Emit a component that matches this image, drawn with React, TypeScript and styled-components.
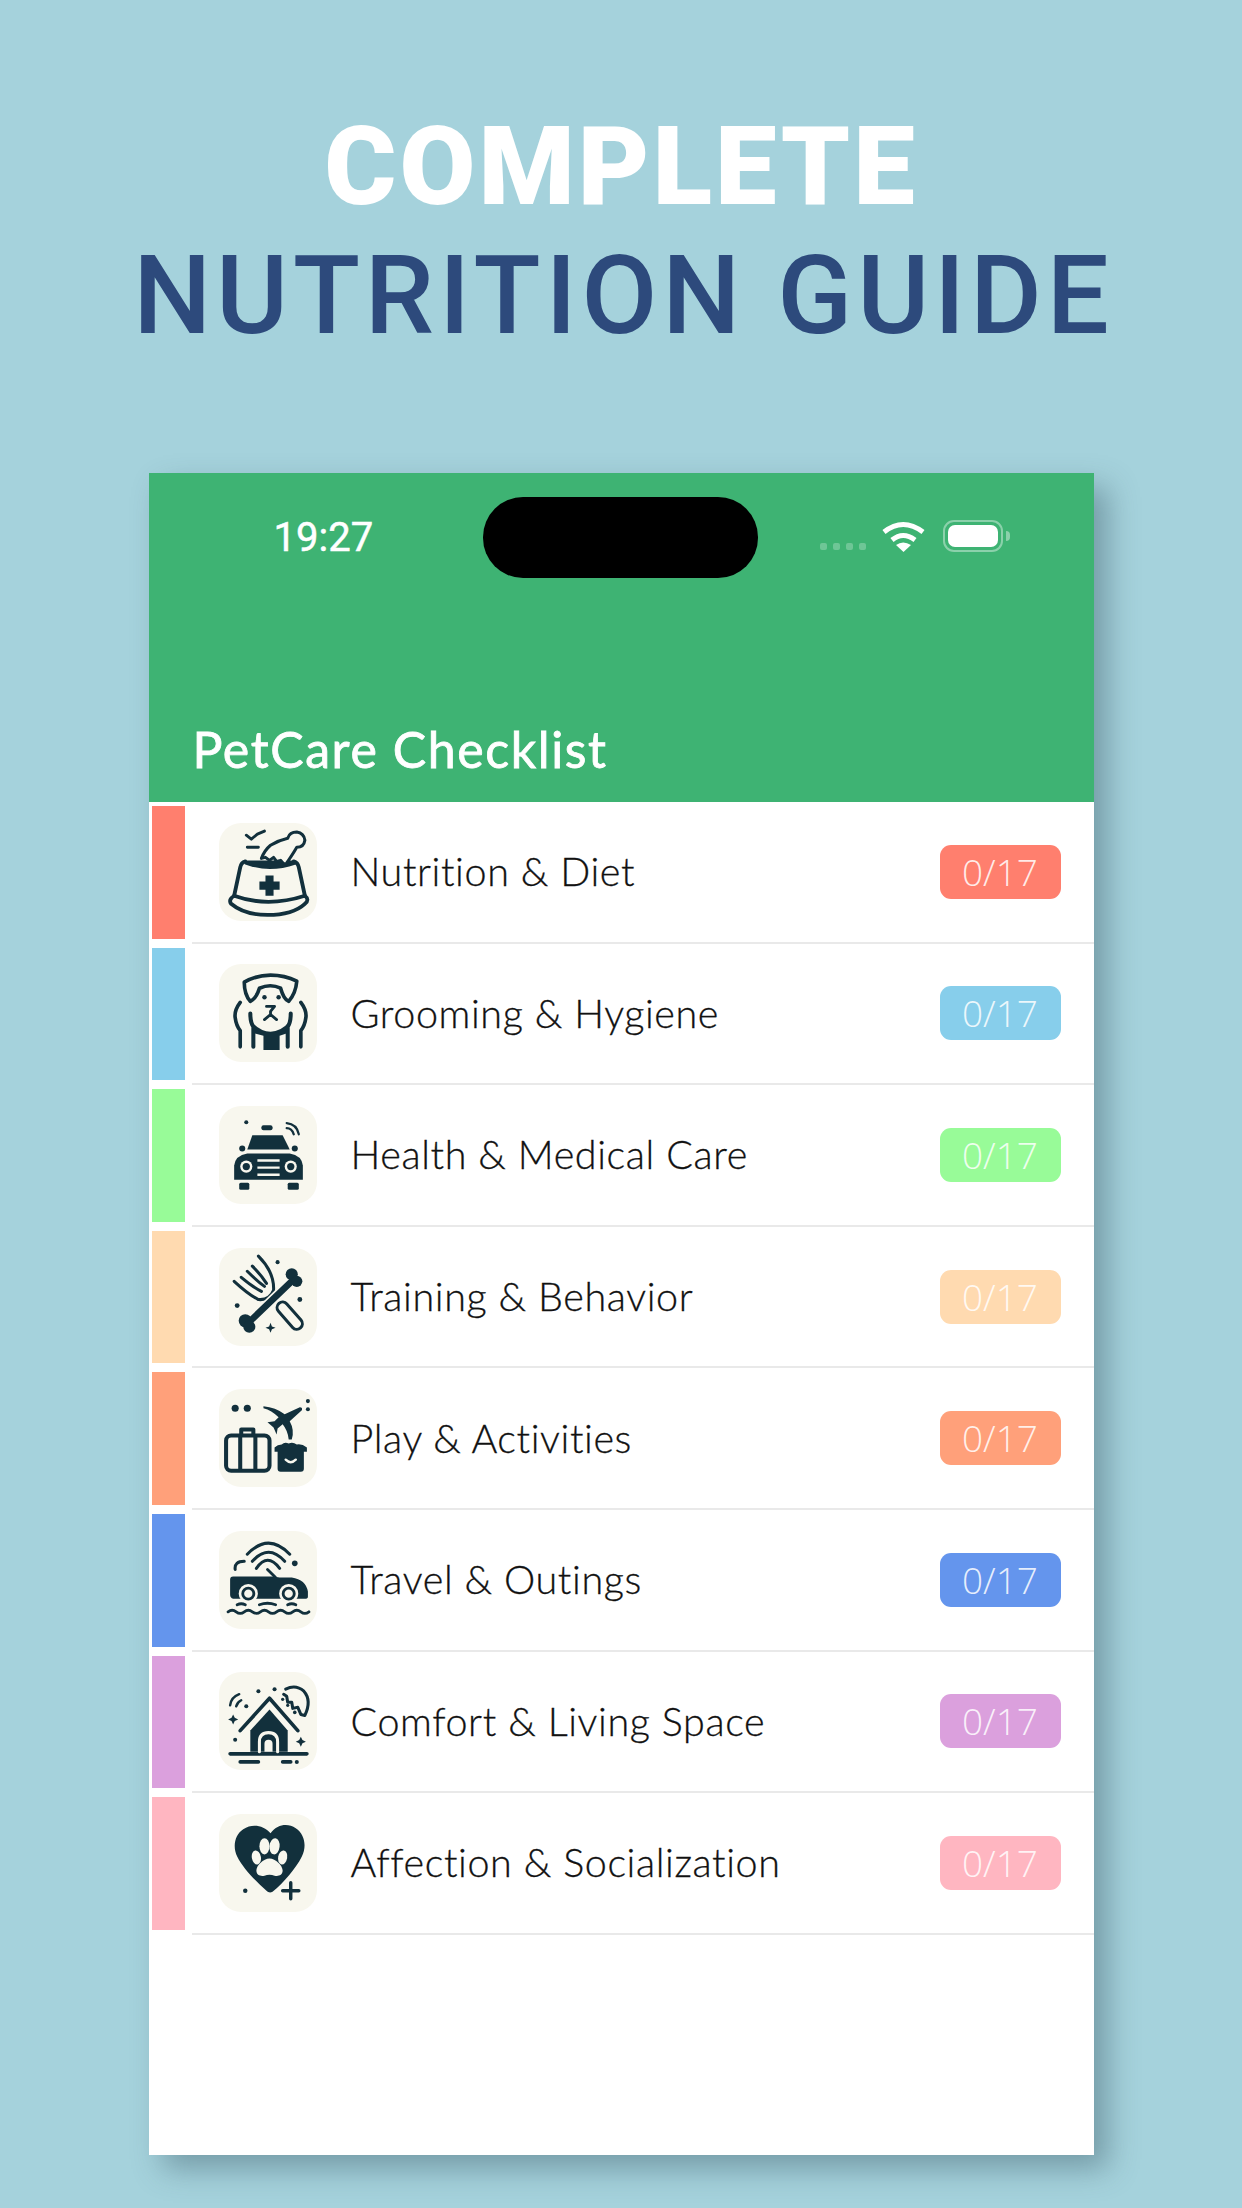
import React, { ReactElement } from 'react'
import styled, { createGlobalStyle } from 'styled-components'

const ink = '#12303c'

const GlobalStyle = createGlobalStyle`
  html, body {
    margin: 0;
    padding: 0;
    background: #a5d2dc;
  }
`

const Page = styled.div`
  width: 1242px;
  height: 2208px;
  overflow: hidden;
  background: #a5d2dc;
  display: flex;
  flex-direction: column;
  align-items: center;
`

const Heading = styled.h1`
  margin: 0;
  padding-top: 102px;
  height: 473px;
  box-sizing: border-box;
  text-align: center;
  font-family: Roboto, sans-serif;
  font-size: 110px;
  line-height: 129px;
  text-transform: uppercase;
`

const HeadingLine = styled.div<{ $light?: boolean }>`
  color: ${(p) => (p.$light ? '#ffffff' : '#2d4a7c')};
  font-weight: ${(p) => (p.$light ? 900 : 500)};
  letter-spacing: ${(p) => (p.$light ? '3px' : '4.9px')};
  padding-left: ${(p) => (p.$light ? '0' : '5px')};
  white-space: nowrap;
`

const Phone = styled.div`
  width: 945px;
  height: 1682px;
  background: #ffffff;
  box-shadow: 14px 14px 28px rgba(60, 90, 105, 0.45);
  display: flex;
  flex-direction: column;
`

const Header = styled.header`
  height: 329px;
  flex-shrink: 0;
  background: #3eb373;
  display: flex;
  flex-direction: column;
  justify-content: space-between;
  color: #ffffff;
`

const StatusBar = styled.div`
  display: flex;
  align-items: flex-start;
  padding: 24px 0 0 125px;
`

const Time = styled.span`
  width: 209px;
  margin-top: 18px;
  font-family: Roboto, sans-serif;
  font-weight: 400;
  font-size: 40px;
  line-height: 46px;
  -webkit-text-stroke: 0.5px #ffffff;
`

const Island = styled.div`
  width: 275px;
  height: 81px;
  border-radius: 40px;
  background: #000000;
`

const StatusIcons = styled.div`
  display: flex;
  align-items: flex-start;
  padding: 23px 0 0 62px;
`

const SignalDots = styled.div`
  display: flex;
  gap: 6px;
  margin: 23px 16px 0 0;
`

const SignalDot = styled.i`
  width: 7px;
  height: 7px;
  border-radius: 2px;
  background: rgba(255, 255, 255, 0.25);
`

const Battery = styled.div`
  position: relative;
  width: 60px;
  height: 32px;
  margin-left: 18px;
  padding: 3px;
  box-sizing: border-box;
  border: 2px solid rgba(255, 255, 255, 0.4);
  border-radius: 11px;

  &::after {
    content: '';
    position: absolute;
    right: -9px;
    top: 9px;
    width: 4px;
    height: 10px;
    border-radius: 0 4px 4px 0;
    background: rgba(255, 255, 255, 0.4);
  }
`

const BatteryFill = styled.div`
  height: 100%;
  border-radius: 7px;
  background: #ffffff;
`

const AppTitle = styled.h2`
  margin: 0;
  padding: 0 0 24px 44px;
  font-family: Lato, sans-serif;
  font-weight: 400;
  font-size: 50px;
  letter-spacing: 1.6px;
  line-height: 58px;
  -webkit-text-stroke: 0.8px #ffffff;
`

const List = styled.ul`
  margin: 0;
  padding: 0;
  list-style: none;
`

const Row = styled.li`
  display: flex;
  height: 141.6px;
`

const Stripe = styled.div<{ $color: string }>`
  width: 33px;
  margin: 4px 7px 5px 3px;
  flex-shrink: 0;
  background: ${(p) => p.$color};
`

const RowBody = styled.div`
  flex: 1;
  display: flex;
  align-items: center;
  padding: 0 33px 0 27px;
  border-bottom: 2px solid #e9e9e9;
`

const IconTile = styled.div`
  width: 98px;
  height: 98px;
  flex-shrink: 0;
  border-radius: 22px;
  background: #f8f7ee;
`

const Glyph = styled.svg`
  display: block;
  width: 98px;
  height: 98px;
`

const Label = styled.span`
  flex: 1;
  margin-left: 34px;
  margin-top: -2px;
  font-family: Lato, sans-serif;
  font-weight: 300;
  font-size: 39.5px;
  letter-spacing: 0.6px;
  color: #111111;
  -webkit-text-stroke: 0.3px #111111;
  white-space: nowrap;
`

const Count = styled.span<{ $color: string }>`
  width: 121px;
  height: 54px;
  border-radius: 11px;
  background: ${(p) => p.$color};
  color: rgba(255, 255, 255, 0.85);
  font-family: 'Open Sans', sans-serif;
  font-weight: 300;
  font-size: 37px;
  line-height: 54px;
  text-align: center;
`

function BowlIcon(): ReactElement {
  return (
    <Glyph viewBox="0 0 97 97" fill="none" stroke={ink} strokeWidth="3.800" strokeLinecap="round" strokeLinejoin="round">
      <path d="M15 72 21 44q1-5 5-6M85 72 79 44q-1-5-5-6" />
      <path fill={ink} stroke="none" d="M26 37h50q2 3 0 4-26 9-50 0-2-1 0-4Z" />
      <path d="M15 72q33 12 70 0M15 72q-6 4-3 8 13 11 36 11 25 0 37-11 5-4 0-8" />
      <path fill={ink} stroke="none" d="M46 52h8v6h6v8h-6v6h-8v-6h-6v-8h6Z" />
      <path fill="#f8f7ee" strokeWidth="3" d="M42 35q3-8 9-13 8-5 17-7 2-6 9-6 7 1 8 8-1 7-8 7-4 7-11 17-3-1-5-4l-4 1-3-4-4 3-4-3Z" />
      <path strokeWidth="2.800" d="M27 12l5 4 6-5 7-3M28 24h11" />
    </Glyph>
  )
}

function DogIcon(): ReactElement {
  return (
    <Glyph viewBox="0 0 97 97" fill="none" stroke={ink} strokeWidth="3.600" strokeLinecap="round" strokeLinejoin="round">
      <path d="M25 18q12-7 26-7t26 6q-1 12-8 20-5-2-8-13-10-5-21 0-3 10-9 13-6-7-6-19Z" />
      <path d="M21 38q-6 8-5 15 1 8 5 13v16M81 38q6 8 5 15-1 8-5 13v16" />
      <path strokeWidth="4" d="M31 49q0 9 3 13v20M71 49q0 9-3 13v20" />
      <path fill={ink} stroke="none" d="M33 58q8 9 18 9 10 0 18-9v10l-9 3v14H44V71l-11-3Z" />
      <circle cx="45" cy="33" r="2.200" fill={ink} stroke="none" />
      <circle cx="59" cy="33" r="2.200" fill={ink} stroke="none" />
      <path strokeWidth="2.800" d="M47 42h8l-4 5v3M45 55l6-5 6 5" />
    </Glyph>
  )
}

function CarIcon(): ReactElement {
  return (
    <Glyph viewBox="0 0 97 97" fill={ink}>
      <circle cx="27" cy="16" r="2" />
      <rect x="42" y="19" width="11" height="5" rx="2" />
      <path fill="none" stroke={ink} strokeWidth="2.200" strokeLinecap="round" d="M67 17q10 1 12 11M67 22q5 0 7 6" />
      <path d="M33 29h30l7 14H28Z" />
      <circle cx="23" cy="42" r="3" />
      <circle cx="75" cy="42" r="3" />
      <path d="M28 47h42q12 2 13 12v14H15V59q1-10 13-12Z" />
      <rect x="20" y="76" width="10" height="7" rx="1.500" />
      <rect x="68" y="76" width="11" height="7" rx="1.500" />
      <circle cx="27" cy="60" r="6" fill="#f8f7ee" />
      <circle cx="27" cy="60" r="3.600" />
      <circle cx="71" cy="60" r="6" fill="#f8f7ee" />
      <circle cx="71" cy="60" r="3.600" />
      <path stroke="#f8f7ee" strokeWidth="2.400" d="M38 54h22M38 61h22M38 68h22" />
    </Glyph>
  )
}

function BoneIcon(): ReactElement {
  return (
    <Glyph viewBox="0 0 97 97" fill="none" stroke={ink} strokeWidth="3" strokeLinecap="round" strokeLinejoin="round">
      <path d="M15 33q14 13 24 18 11 1 15-9 1-18-15-34" />
      <path d="M22 29q12 10 20 14M28 23q10 10 17 15M33 18q9 9 14 17" />
      <path stroke="#f8f7ee" strokeWidth="9" d="M30 73 73 31" />
      <path strokeWidth="6.500" d="M28 75 75 30" />
      <g fill={ink} stroke="none">
        <circle cx="26" cy="72" r="6.500" />
        <circle cx="30" cy="78" r="6" />
        <circle cx="72" cy="26" r="6" />
        <circle cx="77" cy="33" r="5.500" />
        <circle cx="58" cy="14" r="2" />
        <circle cx="80" cy="51" r="2.400" />
        <circle cx="18" cy="57" r="2.400" />
        <path d="m51 74 1.400 3.600L56 79l-3.600 1.400L51 84l-1.400-3.600L46 79l3.600-1.400Z" />
      </g>
      <path strokeWidth="14" d="M63 59 77 75" />
      <path stroke="#f8f7ee" strokeWidth="8" d="M63 59 77 75" />
    </Glyph>
  )
}

function TravelIcon(): ReactElement {
  return (
    <Glyph viewBox="0 0 97 97" fill="none" stroke={ink} strokeWidth="3.400" strokeLinecap="round" strokeLinejoin="round">
      <g fill={ink} stroke="none">
        <circle cx="16" cy="19" r="3.500" />
        <circle cx="28" cy="19" r="3.500" />
        <circle cx="88" cy="12" r="2" />
        <circle cx="88" cy="20" r="2" />
        <path d="M44 17q12 1 21 8l15-7q3 0 2 3L70 32q5 9 2 18h-3q-1-9-6-15l-5 4-1 6-3-7-6-5 7-1 4-4q-7-7-15-9Z" />
      </g>
      <rect x="7" y="46" width="43" height="35" rx="5" strokeWidth="4" />
      <path strokeWidth="4" d="M22 45v-5h12v5M21 47v33M36 47v33" />
      <path fill={ink} stroke="none" d="M62 55q3-3 7-1 4-2 8 1 5-1 10 3v4h-3v17q0 3-3 3H61q-3 0-3-3V62h-3v-4q3-3 7-3Z" />
      <path stroke="#f8f7ee" strokeWidth="2.400" d="M66 70q5 5 10 0" />
    </Glyph>
  )
}

function RoadIcon(): ReactElement {
  return (
    <Glyph viewBox="0 0 97 97" fill="none" stroke={ink} strokeWidth="3" strokeLinecap="round" strokeLinejoin="round">
      <path d="M28 23Q49 1 70 23M33 30Q49 12 65 30M37 37Q48 21 60 37M16 38q-1-8 9-8" />
      <circle cx="75" cy="32" r="2.800" fill={ink} stroke="none" />
      <path strokeWidth="2.800" d="m48 38 8 8" />
      <path fill={ink} stroke="none" d="M14 45h40l6 1h12q14 2 16 14v5q0 2-3 2H14q-3-1-3-4V48q0-3 3-3Z" />
      <circle cx="29" cy="62" r="9.500" fill="#f8f7ee" stroke="none" />
      <circle cx="29" cy="62" r="5.500" strokeWidth="2.800" />
      <circle cx="69" cy="62" r="9.500" fill="#f8f7ee" stroke="none" />
      <circle cx="69" cy="62" r="5.500" strokeWidth="2.800" />
      <path strokeWidth="2.800" d="M18 73q4-2 8 0M40 73q8-3 16 0M68 73q4-2 8 0" />
      <path strokeWidth="2.800" d="M9 80q4-3 8 0t8 0 8 0 8 0 8 0 8 0 8 0 8 0 8 0 8 0" />
    </Glyph>
  )
}

function HouseIcon(): ReactElement {
  return (
    <Glyph viewBox="0 0 97 97" fill="none" stroke={ink} strokeWidth="3.600" strokeLinecap="round" strokeLinejoin="round">
      <path d="M11 81h76M21 89h18M63 89h8" />
      <path d="M21 58 50 26l28 32" />
      <path fill={ink} stroke="none" d="M31 79V58l19-21 18 21v21Z" />
      <path stroke="#f8f7ee" strokeWidth="3" d="M40 79V69q0-9 9-9 9 0 9 9v10" />
      <path fill="#f8f7ee" stroke="none" d="M45 79v-8q0-4 4-4t4 4v8Z" />
      <path strokeWidth="3" d="M66 17q10-5 18 2 8 9 1 24l-4-1-3-7-5 1-1-6-4 0-1-6-3-2" />
      <path strokeWidth="2.400" d="M11 33q1-8 9-11M17 34q1-4 5-6" />
      <g fill={ink} stroke="none">
        <circle cx="39" cy="19" r="2" />
        <circle cx="55" cy="17" r="2" />
        <circle cx="27" cy="34" r="2" />
        <circle cx="63" cy="27" r="1.600" />
        <circle cx="68" cy="33" r="1.600" />
        <circle cx="75" cy="40" r="1.800" />
        <circle cx="16" cy="67" r="2" />
        <circle cx="77" cy="89" r="2" />
        <path d="m14 42 1.600 3.400L19 47l-3.400 1.600L14 52l-1.600-3.400L9 47l3.400-1.600Z" />
        <path d="m81 64 1.600 3.400L86 69l-3.400 1.600L81 74l-1.600-3.400L76 69l3.400-1.600Z" />
      </g>
    </Glyph>
  )
}

function HeartIcon(): ReactElement {
  return (
    <Glyph viewBox="0 0 97 97" fill={ink}>
      <path d="M51 19C58 10 68 9 76 14c9 6 11 18 6 28-6 12-18 26-29 35-2 1-4 1-6-1C36 66 24 54 18 42c-5-10-2-22 6-27 9-6 20-4 27 4Z" />
      <g fill="#f8f7ee">
        <ellipse cx="45" cy="32" rx="5" ry="8" />
        <ellipse cx="55" cy="32" rx="5" ry="8" transform="rotate(6 55 32)" />
        <ellipse cx="37" cy="43" rx="4.500" ry="7" transform="rotate(-10 37 43)" />
        <ellipse cx="63" cy="43" rx="4.500" ry="7" transform="rotate(10 63 43)" />
        <path d="M50 44c6 0 13 7 13 12 0 5-5 6-8 5-3-1-7-1-10 0-3 1-8 0-8-5 0-5 7-12 13-12Z" />
      </g>
      <circle cx="26" cy="76" r="2.200" />
      <path fill="none" stroke={ink} strokeWidth="3.400" strokeLinecap="round" d="M63 76h16M71 68v16" />
    </Glyph>
  )
}

const categories = [
  { name: 'Nutrition & Diet', color: '#ff7f6e', Icon: BowlIcon },
  { name: 'Grooming & Hygiene', color: '#87ceeb', Icon: DogIcon },
  { name: 'Health & Medical Care', color: '#98fb98', Icon: CarIcon },
  { name: 'Training & Behavior', color: '#ffdab0', Icon: BoneIcon },
  { name: 'Play & Activities', color: '#ffa07a', Icon: TravelIcon },
  { name: 'Travel & Outings', color: '#6495ed', Icon: RoadIcon },
  { name: 'Comfort & Living Space', color: '#dba0dd', Icon: HouseIcon },
  { name: 'Affection & Socialization', color: '#ffb6c1', Icon: HeartIcon },
]

export default function App(): ReactElement {
  return (
    <Page>
      <GlobalStyle />
      <Heading>
        <HeadingLine $light>Complete</HeadingLine>
        <HeadingLine>Nutrition Guide</HeadingLine>
      </Heading>
      <Phone>
        <Header>
          <StatusBar>
            <Time>19:27</Time>
            <Island />
            <StatusIcons>
              <SignalDots>
                <SignalDot />
                <SignalDot />
                <SignalDot />
                <SignalDot />
              </SignalDots>
              <svg width="43" height="32" viewBox="0 0 43 32" fill="none" stroke="#fff" strokeWidth="5">
                <path d="M2 12q19-15 39 0M10 20q11-9 23 0" />
                <path fill="#fff" stroke="none" d="M14 25q7-5 15 0l-7.500 7Z" />
              </svg>
              <Battery>
                <BatteryFill />
              </Battery>
            </StatusIcons>
          </StatusBar>
          <AppTitle>PetCare Checklist</AppTitle>
        </Header>
        <List>
          {categories.map(({ name, color, Icon }) => (
            <Row key={name}>
              <Stripe $color={color} />
              <RowBody>
                <IconTile>
                  <Icon />
                </IconTile>
                <Label>{name}</Label>
                <Count $color={color}>0/17</Count>
              </RowBody>
            </Row>
          ))}
        </List>
      </Phone>
    </Page>
  )
}
